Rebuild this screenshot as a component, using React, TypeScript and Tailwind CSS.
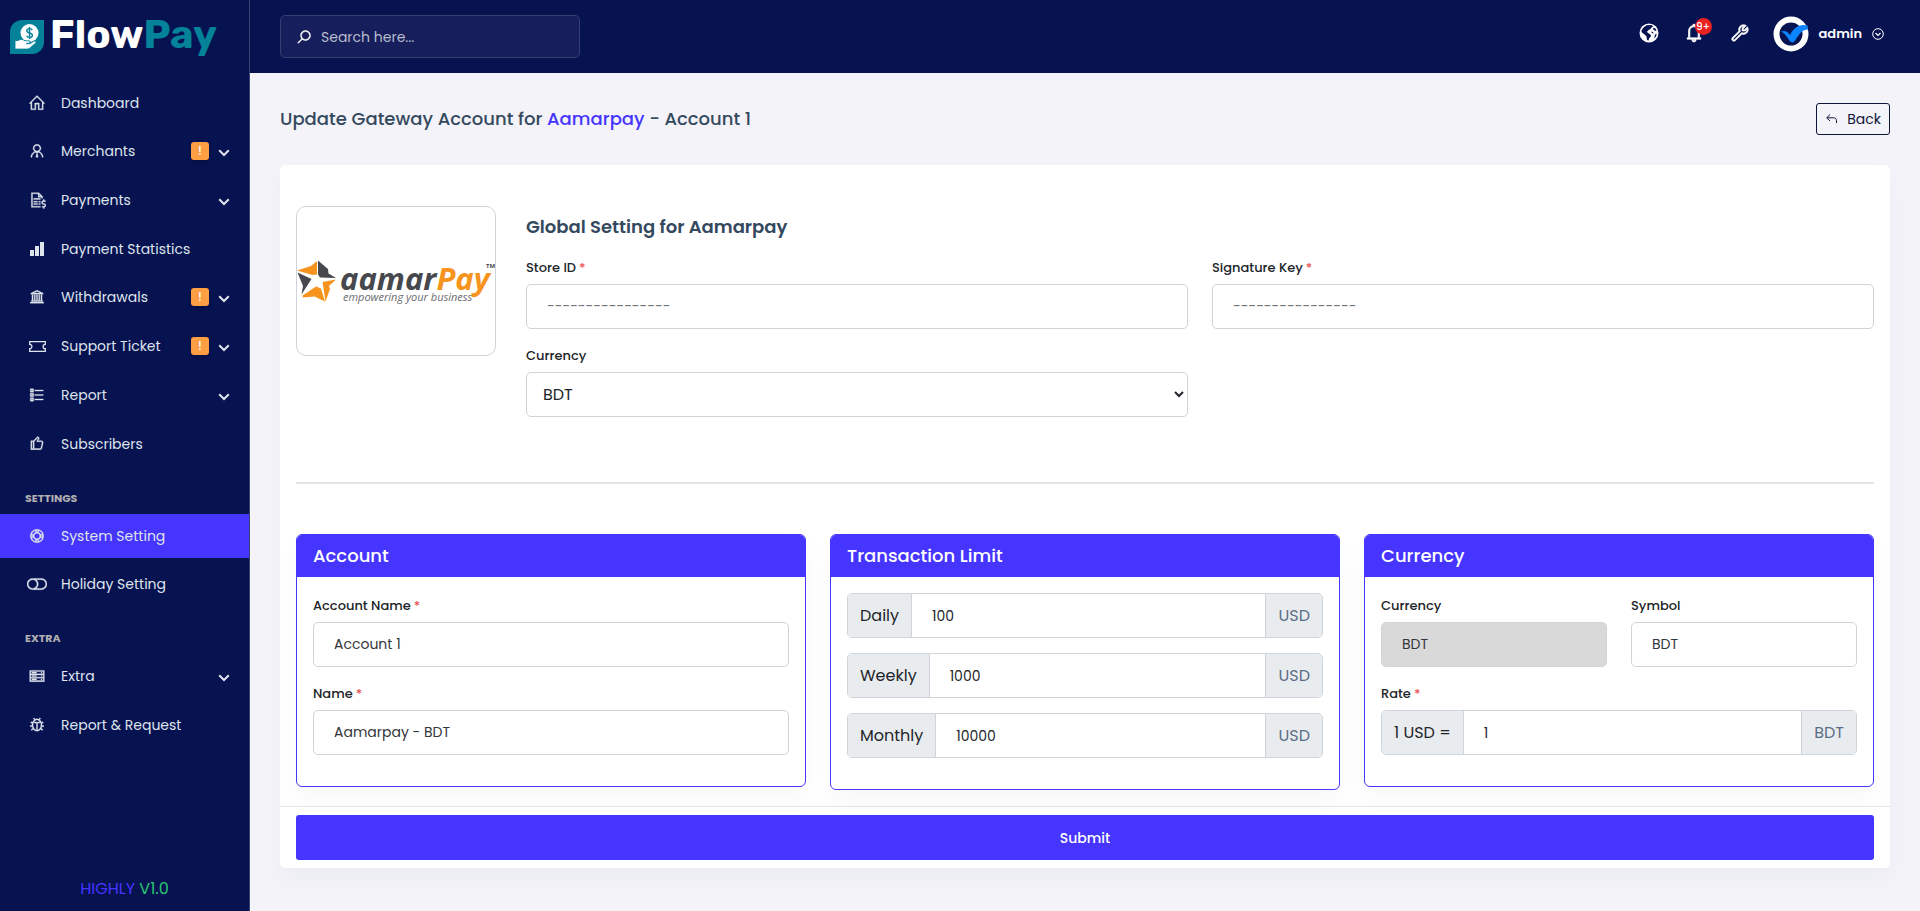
import type { ReactNode } from "react";
import { IconContext } from "react-icons";
import {
  LiaBell,
  LiaBugSolid,
  LiaFileInvoiceDollarSolid,
  LiaHomeSolid,
  LiaLifeRingSolid,
  LiaListSolid,
  LiaSearchSolid,
  LiaServerSolid,
  LiaThumbsUp,
  LiaToggleOffSolid,
  LiaUniversitySolid,
  LiaUserTieSolid,
  LiaWrenchSolid,
} from "react-icons/lia";

type MenuItem = {
  label: string;
  icon: ReactNode;
  alert?: boolean;
  sub?: boolean;
  active?: boolean;
};

const mainMenu: MenuItem[] = [
  { label: "Dashboard", icon: <LiaHomeSolid size={18} /> },
  { label: "Merchants", icon: <LiaUserTieSolid size={18} />, alert: true, sub: true },
  { label: "Payments", icon: <LiaFileInvoiceDollarSolid size={18} />, sub: true },
  { label: "Payment Statistics", icon: <BarsIcon /> },
  { label: "Withdrawals", icon: <LiaUniversitySolid size={18} />, alert: true, sub: true },
  { label: "Support Ticket", icon: <TicketIcon />, alert: true, sub: true },
  { label: "Report", icon: <LiaListSolid size={18} />, sub: true },
  { label: "Subscribers", icon: <LiaThumbsUp size={18} /> },
];

const settingsMenu: MenuItem[] = [
  { label: "System Setting", icon: <LiaLifeRingSolid size={18} />, active: true },
  { label: "Holiday Setting", icon: <LiaToggleOffSolid size={20} /> },
];

const extraMenu: MenuItem[] = [
  { label: "Extra", icon: <LiaServerSolid size={18} />, sub: true },
  { label: "Report & Request", icon: <LiaBugSolid size={18} /> },
];

const limits = [
  { label: "Daily", value: "100" },
  { label: "Weekly", value: "1000" },
  { label: "Monthly", value: "10000" },
];

function BarsIcon() {
  return (
    <svg width="14" height="14" viewBox="0 0 14 14" fill="currentColor">
      <rect x="0" y="8" width="4" height="6" />
      <rect x="5" y="4" width="4" height="10" />
      <rect x="10" y="0" width="4" height="14" />
    </svg>
  );
}

function TicketIcon() {
  return (
    <svg width="17" height="11" viewBox="0 0 17 11" fill="none" stroke="currentColor" strokeWidth="1.3">
      <path d="M.7.7h15.6v2.6a2.2 2.2 0 0 0 0 4.4v2.6H.7V7.7a2.2 2.2 0 0 0 0-4.4z" />
    </svg>
  );
}

function GlobeIcon() {
  return (
    <svg width="20" height="20" viewBox="0 0 20 20">
      <circle cx="10" cy="10" r="9.500" fill="#fff" />
      <path d="M7.500 2.200 12.500 2l1.700 1.300-1.700 1.200-1.300 1.700L9.500 7 8 8.700l1 1.300 2.500 1.500.5 1.800-1.800 2-.7 2.200-1.500-.5-.5-3.500-1.700-1.700L3 9.500 2.300 8 4 5z" fill="#071251" />
      <path d="m14.500 4.500 2.200 1.300.8 2.200-2-.5-1.500-1.300zM12.500 8.500l1.500.5.500 1.500-1.800-.5zM16 11.500l1.700-.5-.7 2.500-1.800 2z" fill="#071251" />
    </svg>
  );
}

function Chevron() {
  return (
    <svg width="12" height="8" viewBox="0 0 12 8" fill="none" stroke="currentColor" strokeWidth="2">
      <path d="M1.2 1.2 6 6l4.800-4.800" />
    </svg>
  );
}

function BrandMark() {
  return (
    <svg width="34" height="34" viewBox="0 0 34 34">
      <path d="M12 0h22v22a12 12 0 0 1-12 12H0V12A12 12 0 0 1 12 0z" fill="#038299" />
      <circle cx="19.500" cy="13" r="9" fill="#fff" />
      <path d="M22.300 10.100c-.5-1-1.500-1.500-2.800-1.500-1.600 0-2.700.8-2.700 2.100 0 3 5.600 1.500 5.600 4.500 0 1.400-1.200 2.200-2.900 2.200-1.400 0-2.500-.6-3-1.700M19.500 7v12" fill="none" stroke="#038299" strokeWidth="1.400" />
      <path d="M5 20.500h3c2.500-1.600 5-1.200 7 .3h4c1.500 0 1.600 2 .2 2.300l-3 .6 3.600-.1 4.400-2.500c1.600-.7 2.600.9 1.400 2l-5.600 5c-1 .8-1.800 1-3 1H5z" fill="#fff" stroke="#038299" strokeWidth=".9" />
    </svg>
  );
}

function AamarpayLogo() {
  return (
    <svg width="198" height="52" viewBox="0 0 198 52" role="img" aria-label="aamarPay">
      <path d="M20 6v13.500L15.500 20 0 15.500 14 11z" fill="#f7941e" />
      <path d="M21 5.500 31 14l.5 4.500 7.500 4.500-16-.5-2-3z" fill="#47484d" />
      <path d="M39 24.500 32 31l1 3-4.500 12.500L25.500 27z" fill="#f7941e" />
      <path d="M28 46.500 17.500 41.500 6 42.500l-.500-2L19 31.500l5 2z" fill="#f7941e" />
      <path d="M4.500 39.500 6 31 .5 17.500 14.500 24z" fill="#47484d" />
      <text x="43" y="35" fontSize="31" fontWeight="700" fontStyle="italic" fontFamily="'Open Sans', 'Noto Sans', sans-serif">
        <tspan fill="#47484d">aamar</tspan>
        <tspan fill="#f7941e">Pay</tspan>
      </text>
      <text x="46" y="46" fontSize="11" fontStyle="italic" fill="#6a6b70" fontFamily="'Open Sans', 'Noto Sans', sans-serif">
        empowering your business
      </text>
      <text x="189" y="13" fontSize="6" fontWeight="700" fill="#47484d" fontFamily="'Open Sans', sans-serif">
        TM
      </text>
    </svg>
  );
}

function Avatar() {
  return (
    <svg width="36" height="36" viewBox="0 0 36 36">
      <circle cx="18" cy="18" r="14.500" fill="#071251" stroke="#fff" strokeWidth="6" />
      <path d="M8 15.500c4-1.500 6.500 0 9 3.500 4-7.500 9.500-11.500 17.500-9.500l.5 4c-4.500-.5-8 3-12.500 10.500-2 3.300-4.500 3.300-6.500 0-2-3.500-4.500-7-8-8.500z" fill="#0a84ff" />
    </svg>
  );
}

function SideMenu({ items }: { items: MenuItem[] }) {
  return (
    <ul>
      {items.map((item) => (
        <li key={item.label} className={item.sub ? "mb-[5px]" : "mb-1"}>
          <a
            href="#"
            className={`flex h-11 items-center pr-[19px] pl-[25px] text-sm text-[#dee4ec] ${item.active ? "bg-[#4634ff]" : ""}`}
          >
            <span className="flex w-6 justify-center">{item.icon}</span>
            <span className="ml-3 flex-1">{item.label}</span>
            {item.alert && (
              <span className="mr-[9px] flex size-[18px] items-center justify-center rounded-[3px] bg-[#ff9f43] text-xs font-medium text-white shadow-md">
                !
              </span>
            )}
            {item.sub && (
              <span className="pt-1">
                <Chevron />
              </span>
            )}
          </a>
        </li>
      ))}
    </ul>
  );
}

function MenuHeader({ children }: { children: string }) {
  return <h6 className="mt-6 mb-2 pl-[25px] text-[11px] leading-4 font-bold text-[#b0b0b0] uppercase">{children}</h6>;
}

function Label({ htmlFor, required, children }: { htmlFor: string; required?: boolean; children: string }) {
  return (
    <label htmlFor={htmlFor} className="mb-[3px] block text-[13px] leading-[26px] font-medium text-[#212529]">
      {children}
      {required && <span className="ml-[3px] text-[#ea5455]">*</span>}
    </label>
  );
}

type FieldProps = {
  id: string;
  label: string;
  value?: string;
  placeholder?: string;
  required?: boolean;
  readOnly?: boolean;
};

function Field({ id, label, value, placeholder, required, readOnly }: FieldProps) {
  return (
    <div>
      <Label htmlFor={id} required={required}>
        {label}
      </Label>
      <input
        id={id}
        type="text"
        defaultValue={value}
        placeholder={placeholder}
        readOnly={readOnly}
        className={`block h-[45px] w-full rounded-[5px] border border-[#ced4da] px-5 text-sm text-[#34373b] placeholder:text-[#6c757d] ${readOnly ? "bg-[#d9d9d9]" : "bg-white"}`}
      />
    </div>
  );
}

function InputGroup({ id, before, after, value }: { id: string; before: ReactNode; after: string; value: string }) {
  return (
    <div className="flex h-[45px] overflow-hidden rounded-[5px] border border-[#ced4da]">
      {before}
      <input id={id} type="text" defaultValue={value} className="min-w-0 flex-1 px-5 text-sm text-[#212529]" />
      <span className="flex items-center border-l border-[#ced4da] bg-[#e9ecef] px-3 text-base text-[#5b6e88]">{after}</span>
    </div>
  );
}

const addonClass = "flex items-center border-r border-[#ced4da] bg-[#e9ecef] px-3 text-base text-[#212529]";

function Panel({ title, children }: { title: string; children: ReactNode }) {
  return (
    <section className="overflow-hidden rounded-md border border-[#4634ff] bg-white shadow-[0_12px_24px_rgba(18,38,63,0.03)]">
      <h5 className="flex h-[42px] items-center bg-[#4634ff] px-4 text-lg font-medium text-white">{title}</h5>
      <div className="px-4 pt-4 pb-[31px]">{children}</div>
    </section>
  );
}

function Sidebar() {
  return (
    <aside className="flex w-[250px] shrink-0 flex-col border-r border-[#3a4373] bg-[#071251]">
      <a href="#" className="flex h-[73px] items-center gap-1.5 pl-2.5">
        <BrandMark />
        <span className="pb-1 font-['Rubik','Inter',sans-serif] text-[40px] leading-none font-bold text-white">
          Flow<span className="text-[#038299]">Pay</span>
        </span>
      </a>
      <nav className="pt-2">
        <IconContext.Provider value={{ attr: { strokeWidth: "0.6" } }}>
          <SideMenu items={mainMenu} />
          <MenuHeader>Settings</MenuHeader>
          <SideMenu items={settingsMenu} />
          <MenuHeader>Extra</MenuHeader>
          <SideMenu items={extraMenu} />
        </IconContext.Provider>
      </nav>
      <p className="mt-auto pb-2.5 text-center text-base leading-6 text-[#4634ff]">
        HIGHLY <span className="text-[#28c76f]">V1.0</span>
      </p>
    </aside>
  );
}

function Topbar() {
  return (
    <header className="flex h-[73px] items-center justify-between bg-[#071251] pr-9 pl-[30px]">
      <label className="flex h-[43px] w-[300px] items-center rounded-[5px] border border-[#353e70] bg-[#161f5b] px-[15px] text-white">
        <LiaSearchSolid size={16} strokeWidth={1} />
        <input
          type="search"
          aria-label="Search"
          placeholder="Search here..."
          className="ml-[9px] min-w-0 flex-1 bg-transparent text-sm placeholder:text-[#b9bccd]"
        />
      </label>
      <div className="flex items-center pb-1.5 text-white">
        <button type="button" aria-label="Visit website" className="mb-0.5">
          <GlobeIcon />
        </button>
        <button type="button" aria-label="Notifications" className="relative mb-0.5 ml-6">
          <LiaBell size={22} strokeWidth={1} />
          <span className="absolute -top-1 left-3 flex size-[17px] items-center justify-center rounded-full bg-[#eb2222] text-[10px] font-medium">
            9+
          </span>
        </button>
        <button type="button" aria-label="System tools" className="mb-0.5 ml-6">
          <LiaWrenchSolid size={22} strokeWidth={1} />
        </button>
        <button type="button" className="ml-[22px] flex items-center">
          <Avatar />
          <span className="ml-2.5 text-[13px] font-semibold">admin</span>
          <svg className="ml-2.5" width="12" height="12" viewBox="0 0 12 12" fill="none" stroke="currentColor">
            <circle cx="6" cy="6" r="5.300" />
            <path d="M3.500 5 6 7.500 8.500 5" strokeWidth="1.200" />
          </svg>
        </button>
      </div>
    </header>
  );
}

export default function App() {
  return (
    <div className="flex min-h-screen bg-[#f3f3f9] font-['Poppins','Inter',sans-serif]">
      <Sidebar />
      <div className="min-w-0 flex-1">
        <Topbar />
        <main className="px-[30px] py-[30px]">
          <div className="mb-[30px] flex items-center justify-between">
            <h1 className="text-lg font-medium text-[#34495e]">
              Update Gateway Account for <span className="text-[#4634ff]">Aamarpay</span> - Account 1
            </h1>
            <a href="#" className="flex h-8 items-center gap-2 rounded-[3px] border border-[#10163a] px-2 text-sm text-[#10163a]">
              <svg width="14" height="12" viewBox="0 0 14 12" fill="none" stroke="currentColor">
                <path d="M5 1.500 1.700 4.800 5 8M2 4.800h6.500c2 0 3 1 3 3V10" />
              </svg>
              Back
            </a>
          </div>

          <form className="rounded-[5px] bg-white shadow-[0_12px_24px_rgba(18,38,63,0.03)]">
            <div className="px-4 pt-[41px] pb-4">
              <div className="flex items-start gap-[30px]">
                <div className="flex h-[150px] w-[200px] shrink-0 items-center justify-center rounded-[10px] border border-[#ced4da]">
                  <AamarpayLogo />
                </div>
                <div className="min-w-0 flex-1 pt-2">
                  <h4 className="mb-[15px] text-lg leading-[26px] font-semibold text-[#34495e]">Global Setting for Aamarpay</h4>
                  <div className="grid grid-cols-2 gap-x-6 gap-y-3.5">
                    <Field id="store-id" label="Store ID" placeholder="----------------" required />
                    <Field id="signature-key" label="Signature Key" placeholder="----------------" required />
                    <div>
                      <Label htmlFor="gateway-currency">Currency</Label>
                      <select
                        id="gateway-currency"
                        className="block h-[45px] w-full rounded-[5px] border border-[#ced4da] bg-white pl-3 text-base text-[#212529]"
                      >
                        <option>BDT</option>
                      </select>
                    </div>
                  </div>
                </div>
              </div>

              <hr className="mt-[65px] mb-[50px] border-t-2 border-[#e5e5e5]" />

              <div className="grid grid-cols-3 items-start gap-6">
                <Panel title="Account">
                  <div className="space-y-3.5">
                    <Field id="account-name" label="Account Name" value="Account 1" required />
                    <Field id="name" label="Name" value="Aamarpay - BDT" required />
                  </div>
                </Panel>

                <Panel title="Transaction Limit">
                  <div className="space-y-[15px]">
                    {limits.map((limit) => (
                      <InputGroup
                        key={limit.label}
                        id={limit.label}
                        before={
                          <label htmlFor={limit.label} className={addonClass}>
                            {limit.label}
                          </label>
                        }
                        value={limit.value}
                        after="USD"
                      />
                    ))}
                  </div>
                </Panel>

                <Panel title="Currency">
                  <div className="mb-3.5 grid grid-cols-2 gap-6">
                    <Field id="currency" label="Currency" value="BDT" readOnly />
                    <Field id="symbol" label="Symbol" value="BDT" />
                  </div>
                  <Label htmlFor="rate" required>
                    Rate
                  </Label>
                  <InputGroup id="rate" before={<span className={addonClass}>1 USD =</span>} value="1" after="BDT" />
                </Panel>
              </div>
            </div>

            <div className="border-t border-[#e5e5e5] px-4 py-2">
              <button type="submit" className="block h-[45px] w-full rounded-[3px] bg-[#4634ff] text-sm font-medium text-white">
                Submit
              </button>
            </div>
          </form>
        </main>
      </div>
    </div>
  );
}
